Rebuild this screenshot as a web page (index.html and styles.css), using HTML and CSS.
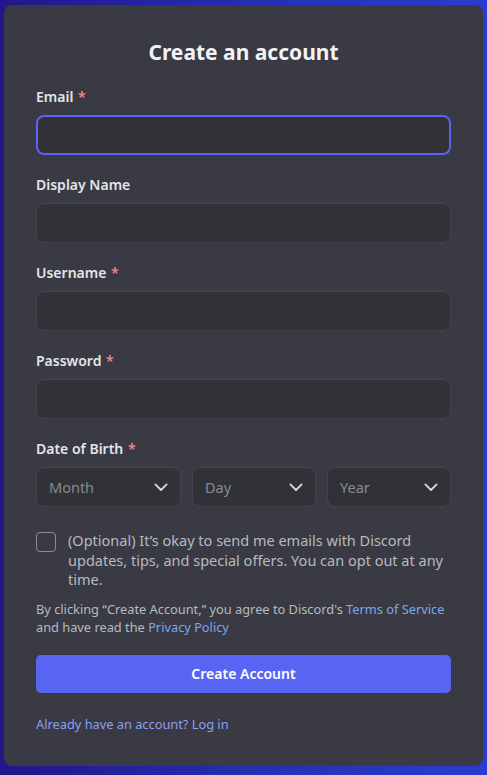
FILE: index.html
```html
<!DOCTYPE html>
<html lang="en">
<head>
    <meta charset="UTF-8">
    <meta name="viewport" content="width=device-width, initial-scale=1.0">
    <title>Create an account</title>
    <link rel="stylesheet" href="styles.css">
</head>
<body>
    <div class="backdrop">
        <!-- Register card -->
        <form class="card" onsubmit="return false">
            <h1 class="title">Create an account</h1>

            <div class="field">
                <label class="label" for="email">Email <span class="req">*</span></label>
                <input class="input focused" type="email" id="email">
            </div>

            <div class="field">
                <label class="label" for="display">Display Name</label>
                <input class="input" type="text" id="display">
            </div>

            <div class="field">
                <label class="label" for="username">Username <span class="req">*</span></label>
                <input class="input" type="text" id="username">
            </div>

            <div class="field">
                <label class="label" for="password">Password <span class="req">*</span></label>
                <input class="input" type="password" id="password">
            </div>

            <div class="field">
                <span class="label">Date of Birth <span class="req">*</span></span>
                <div class="dob">
                    <div class="select"><span>Month</span>
                        <svg width="18" height="18" viewBox="0 0 24 24"><path d="M4.5 8.5 12 16l7.5-7.5" fill="none" stroke="#dbdee1" stroke-width="2.4" stroke-linecap="round" stroke-linejoin="round"/></svg>
                    </div>
                    <div class="select"><span>Day</span>
                        <svg width="18" height="18" viewBox="0 0 24 24"><path d="M4.5 8.5 12 16l7.5-7.5" fill="none" stroke="#dbdee1" stroke-width="2.4" stroke-linecap="round" stroke-linejoin="round"/></svg>
                    </div>
                    <div class="select"><span>Year</span>
                        <svg width="18" height="18" viewBox="0 0 24 24"><path d="M4.5 8.5 12 16l7.5-7.5" fill="none" stroke="#dbdee1" stroke-width="2.4" stroke-linecap="round" stroke-linejoin="round"/></svg>
                    </div>
                </div>
            </div>

            <label class="optin">
                <span class="checkbox"></span>
                <span class="optin-text">(Optional) It’s okay to send me emails with Discord updates, tips, and special offers. You can opt out at any time.</span>
            </label>

            <p class="legal">By clicking “Create Account,” you agree to Discord's <a href="#">Terms of Service</a> and have read the <a href="#">Privacy Policy</a></p>

            <button class="submit" type="submit">Create Account</button>

            <a class="login" href="#">Already have an account? Log in</a>
        </form>
    </div>
</body>
</html>
```

FILE: styles.css
```css
/* Discord style register page */
body {
    margin: 0;
    font-family: 'Noto Sans', 'Open Sans', sans-serif;
    background: linear-gradient(90deg, #22168a 0%, #2530b4 55%, #2a3cd0 100%);
    height: 775px;
    overflow: hidden;
}

.backdrop {
    padding: 5px 4px 0 4px;
}

.card {
    background-color: #393a43;
    border-radius: 8px;
    padding: 32px;
    height: 697px;
    display: flex;
    flex-direction: column;
}

.title {
    margin: 0 0 20px;
    font-size: 21px;
    line-height: 30px;
    font-weight: 700;
    text-align: center;
    color: #f2f3f5;
}

.field {
    margin-bottom: 20px;
}

.label {
    display: block;
    font-size: 14px;
    line-height: 20px;
    font-weight: 600;
    color: #e3e5e8;
    margin-bottom: 8px;
}

.req {
    color: #f38688;
    padding-left: 1px;
}

.input {
    display: block;
    box-sizing: border-box;
    width: 100%;
    height: 40px;
    background-color: #313238;
    border: 1px solid #43444c;
    border-radius: 8px;
    outline: none;
    color: #dbdee1;
    font-family: inherit;
    font-size: 16px;
    padding: 0 10px;
}

.input.focused {
    border: 2px solid #5865f2;
}

.dob {
    display: grid;
    grid-template-columns: 145fr 124fr 124fr;
    gap: 11px;
}

.select {
    box-sizing: border-box;
    height: 40px;
    background-color: #313238;
    border: 1px solid #43444c;
    border-radius: 8px;
    display: flex;
    align-items: center;
    justify-content: space-between;
    padding: 0 10px 0 12px;
    color: #878a91;
    font-size: 14.5px;
}

.optin {
    display: flex;
    align-items: flex-start;
    gap: 12px;
    margin-top: 4px;
}

.checkbox {
    flex: none;
    box-sizing: border-box;
    width: 20px;
    height: 20px;
    margin-top: 1px;
    border: 1px solid #8a8d94;
    border-radius: 4px;
}

.optin-text {
    font-size: 14.5px;
    line-height: 19.5px;
    color: #b5bac1;
}

.legal {
    margin: 10px 0 19px;
    font-size: 12.8px;
    line-height: 18px;
    color: #b5bac1;
}

.legal a,
.login {
    color: #7ea6ef;
    text-decoration: none;
}

.submit {
    height: 40px;
    border: none;
    border-radius: 5px;
    background-color: #5865f2;
    color: #fff;
    font-family: inherit;
    font-size: 14px;
    font-weight: 600;
    cursor: pointer;
}

.login {
    align-self: flex-start;
    margin-top: 21px;
    font-size: 12.8px;
    line-height: 20px;
    color: #8c9ff0;
}
```
